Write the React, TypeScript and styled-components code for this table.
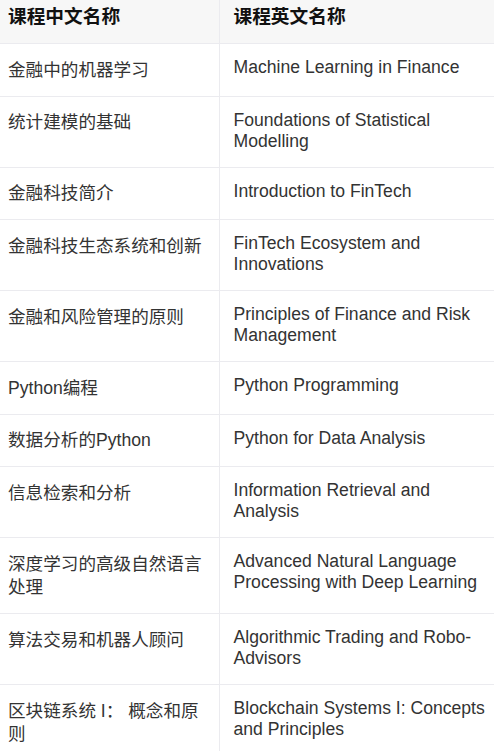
import React from "react";
import styled, { createGlobalStyle } from "styled-components";

const GlobalStyle = createGlobalStyle`
  html, body {
    margin: 0;
    padding: 0;
    background: #fff;
  }
  body {
    font-family: "Liberation Sans", "Noto Sans CJK SC", sans-serif;
  }
`;

const Table = styled.table`
  width: 494px;
  table-layout: fixed;
  border-collapse: collapse;
  border-spacing: 0;
`;

const ZhCol = styled.col`
  width: 219px;
`;

const Row = styled.tr`
  border-bottom: 1px solid #ebebef;
`;

const HeadRow = styled(Row)`
  background: #f7f7f7;
`;

const HeadCell = styled.th<{ $second?: boolean }>`
  box-sizing: border-box;
  text-align: left;
  vertical-align: top;
  padding: 5px 8px 14px ${(p) => (p.$second ? "14px" : "8px")};
  border-left: ${(p) => (p.$second ? "1px solid #ebebef" : "none")};
  font-family: "Liberation Sans", "Noto Sans CJK SC", sans-serif;
  font-size: 18.7px;
  font-weight: 700;
  line-height: 24px;
  color: #111;
`;

const ZhCell = styled.td`
  box-sizing: border-box;
  vertical-align: top;
  padding: 14.5px 8px 13.5px 8px;
  font-family: "Liberation Sans", "Noto Sans CJK SC", sans-serif;
  font-size: 17.6px;
  line-height: 23.5px;
  color: #333;
`;

const EnCell = styled.td`
  box-sizing: border-box;
  vertical-align: top;
  padding: 13px 8px 15px 14px;
  border-left: 1px solid #ebebef;
  font-family: "Liberation Sans", Arial, sans-serif;
  font-size: 17.6px;
  line-height: 21px;
  color: #333;
`;

const courses: [string, string][] = [
  ["金融中的机器学习", "Machine Learning in Finance"],
  ["统计建模的基础", "Foundations of Statistical Modelling"],
  ["金融科技简介", "Introduction to FinTech"],
  ["金融科技生态系统和创新", "FinTech Ecosystem and Innovations"],
  ["金融和风险管理的原则", "Principles of Finance and Risk Management"],
  ["Python编程", "Python Programming"],
  ["数据分析的Python", "Python for Data Analysis"],
  ["信息检索和分析", "Information Retrieval and Analysis"],
  ["深度学习的高级自然语言处理", "Advanced Natural Language Processing with Deep Learning"],
  ["算法交易和机器人顾问", "Algorithmic Trading and Robo-Advisors"],
  ["区块链系统 I： 概念和原则", "Blockchain Systems I: Concepts and Principles"],
];

export default function App() {
  return (
    <>
      <GlobalStyle />
      <Table>
        <colgroup>
          <ZhCol />
          <col />
        </colgroup>
        <thead>
          <HeadRow>
            <HeadCell>课程中文名称</HeadCell>
            <HeadCell $second>课程英文名称</HeadCell>
          </HeadRow>
        </thead>
        <tbody>
          {courses.map(([zh, en]) => (
            <Row key={en}>
              <ZhCell>{zh}</ZhCell>
              <EnCell>{en}</EnCell>
            </Row>
          ))}
        </tbody>
      </Table>
    </>
  );
}
